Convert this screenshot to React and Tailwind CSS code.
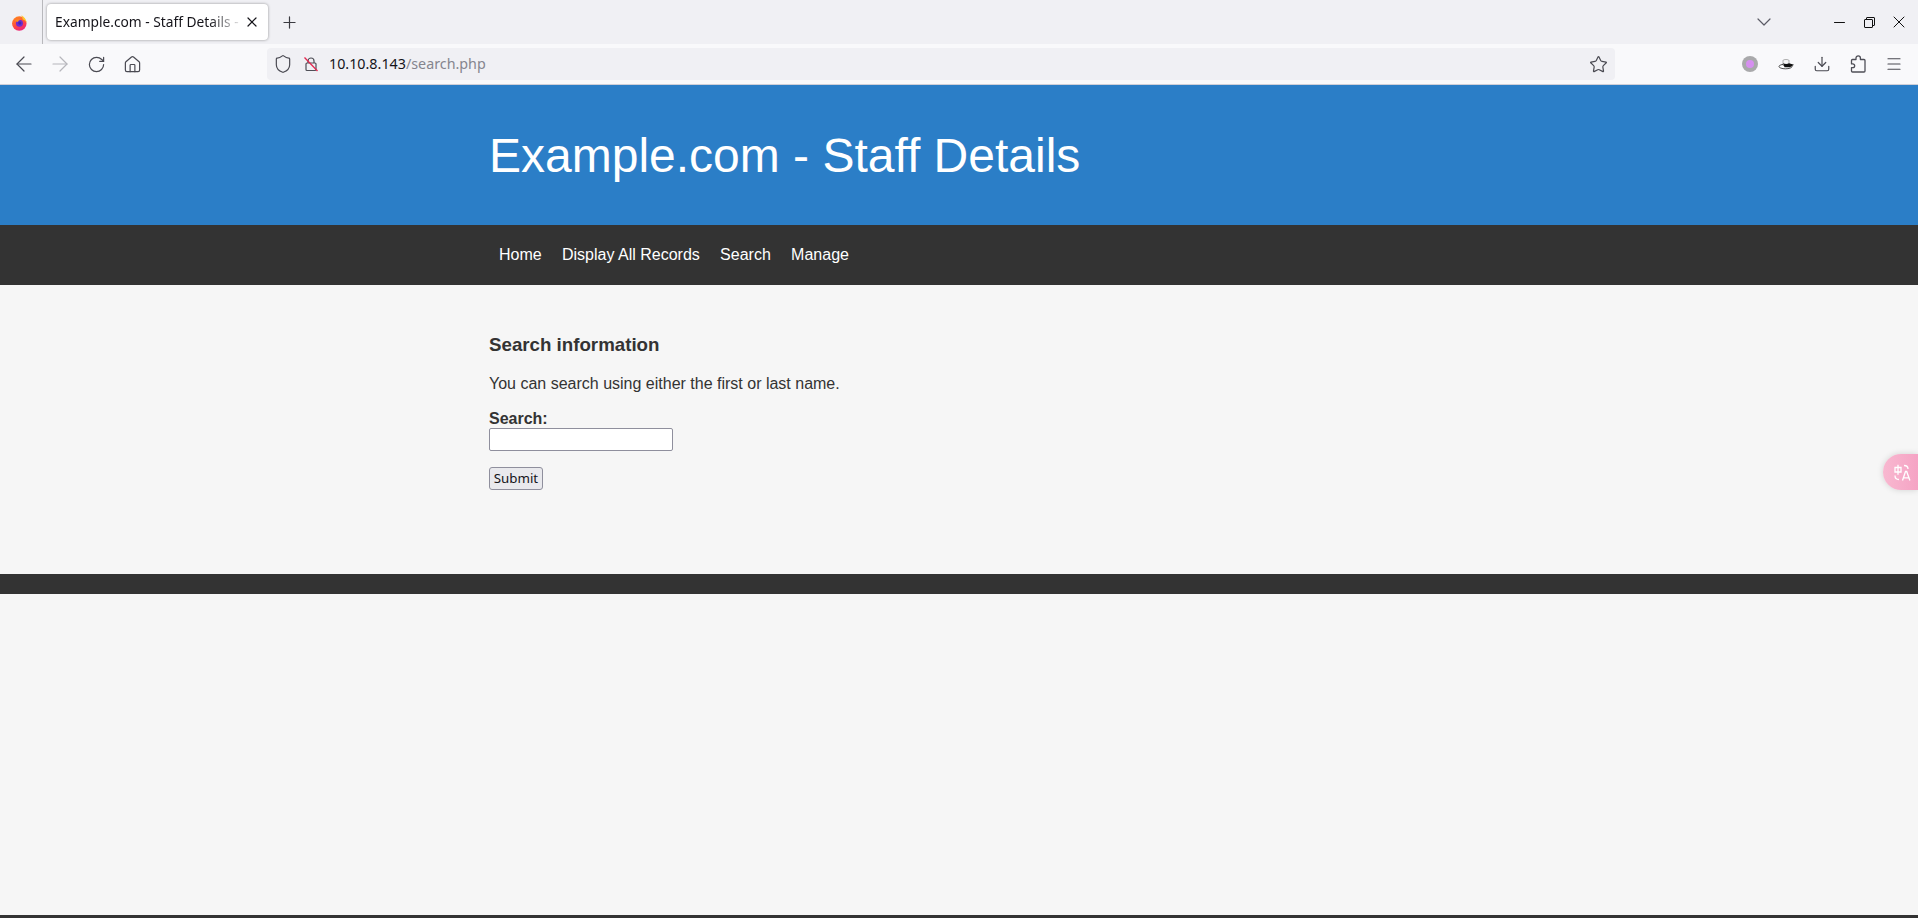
import React from "react";
import { ArrowLeft, ArrowRight, RotateCw, House, Shield, Star, Download, Menu, X, Plus, ChevronDown, Minus } from "lucide-react";

const navLinks = ["Home", "Display All Records", "Search", "Manage"];

// Firefox logo, drawn by hand
const FirefoxLogo = () => (
  <svg width="17" height="17" viewBox="0 0 16 16">
    <defs>
      <linearGradient id="ffBody" x1="0.2" y1="0" x2="0.7" y2="1">
        <stop offset="0" stopColor="#ff8a1f" />
        <stop offset="0.55" stopColor="#ff4a3e" />
        <stop offset="1" stopColor="#ea1f84" />
      </linearGradient>
    </defs>
    <circle cx="7.800" cy="9" r="6.800" fill="url(#ffBody)" />
    <path d="M9.500 1c2.800 1.600 5 4 5.300 7.500-1-1.800-2.300-3-4-3.500.3-1.500-.3-2.800-1.300-4z" fill="#ffc928" />
    <circle cx="8" cy="8.600" r="3.300" fill="#6f2bd0" />
    <path d="M3.500 6.500c1.500-1.800 4.500-2 6.500-.8-1.800-.2-3 .4-3.500 1.800z" fill="#ff8a1f" />
    <circle cx="8.300" cy="8.500" r="1.500" fill="#3f2cb5" />
  </svg>
);

const InsecureLock = () => (
  <svg width="16" height="16" viewBox="0 0 16 16" fill="none">
    <path d="M5 7V5a3 3 0 0 1 6 0v2" stroke="#4f4f57" strokeWidth="1.200" />
    <rect x="3" y="7" width="10" height="7.500" rx="1" stroke="#4f4f57" strokeWidth="1.200" />
    <path d="M1.500 1.500 14.500 15" stroke="#e22850" strokeWidth="1.300" />
  </svg>
);

const HatIcon = () => (
  <svg width="17" height="12" viewBox="0 0 16 12">
    <ellipse cx="7" cy="8.500" rx="6.500" ry="2.300" fill="#fff" stroke="#222" strokeWidth="0.800" />
    <path d="M4.500 7.500V2.500C4.500 1.200 10.500 1.200 10.500 2.500V7.500z" fill="#f6f6f6" stroke="#444" strokeWidth="0.400" />
    <path d="M4.500 5.300c2 1 4.500 1 6 0l5 1.500-4 2.400H6z" fill="#111" />
  </svg>
);

const PuzzleIcon = () => (
  <svg width="16" height="18" viewBox="0 0 16 18" fill="none" stroke="#4f4f57" strokeWidth="1.300" strokeLinejoin="round">
    <path d="M6 3.500V3a2.200 2.200 0 0 1 4.400 0v1.500H14c.5 0 1 .5 1 1V16c0 .5-.5 1-1 1H2.500c-.5 0-1-.5-1-1v-3.300h1.300a1.900 1.900 0 0 0 0-3.800H1.500V5.500c0-.5.5-1 1-1H6z" />
  </svg>
);

const TranslateGlyph = () => (
  <svg width="17" height="17" viewBox="0 0 17 17" fill="none" stroke="#fff" strokeWidth="1.300">
    <path d="M1 3.500h6v4.500H1zM4 .8v10" />
    <path d="M1 11.500c0 2.500 1 4 4 4" />
    <path d="M10 1.500c2.500 0 4 1 4 3.500" />
    <path d="M8.500 16.500 11.500 7.500h1.200l3.200 9M9.700 13.800h5" />
  </svg>
);

export default function App() {
  return (
    <div className="relative h-[918px] overflow-hidden bg-[#f6f6f6] font-['Liberation_Sans',Arial,sans-serif] flex flex-col">
      {/* Tab strip */}
      <div className="h-[44px] bg-[#f0f0f4] flex items-center font-['Noto_Sans',sans-serif] shrink-0">
        <div className="w-[43px] h-full flex items-center justify-center border-r border-[#b8b8bc]">
          <div className="mr-[4px] flex"><FirefoxLogo /></div>
        </div>
        <div className="ml-[4px] w-[221px] h-[36px] bg-white rounded-[4px] shadow-[0_0_3px_rgba(0,0,0,0.4)] flex items-center pl-[8px]">
          <span className="w-[188px] overflow-hidden whitespace-nowrap text-[13.750px] text-[#15141a] [mask-image:linear-gradient(to_right,black_82%,transparent)]">Example.com - Staff Details -</span>
          <X size={16} absoluteStrokeWidth strokeWidth={1.2} className="text-[#15141a] ml-[1px]" />
        </div>
        <div className="ml-[12px]">
          <Plus size={19} absoluteStrokeWidth strokeWidth={1.2} className="text-[#3a3a40]" />
        </div>
        <div className="flex-1" />
        <ChevronDown size={24} absoluteStrokeWidth strokeWidth={1.2} className="text-[#5b5b66] mr-[48px]" />
        <div className="flex items-center pr-[4px]">
          <div className="w-[30px] flex justify-center">
            <Minus size={17} absoluteStrokeWidth strokeWidth={1.2} className="text-[#111]" />
          </div>
          <div className="w-[30px] flex justify-center">
            <div className="w-[11px] h-[11px] relative">
              <div className="absolute left-[2px] top-0 w-[9px] h-[9px] border border-[#111] rounded-[1px]" />
              <div className="absolute left-0 top-[2px] w-[9px] h-[9px] border border-[#111] rounded-[1px] bg-[#f0f0f4]" />
            </div>
          </div>
          <div className="w-[30px] flex justify-center">
            <X size={20} absoluteStrokeWidth strokeWidth={1} className="text-[#111]" />
          </div>
        </div>
      </div>

      {/* Toolbar */}
      <div className="h-[41px] bg-[#f9f9fb] border-b border-[#cfcfd8] flex items-center shrink-0">
        <div className="w-[267px] flex items-center pl-[6px]">
          <div className="w-[36px] flex justify-center"><ArrowLeft size={24} absoluteStrokeWidth strokeWidth={1.2} className="text-[#4a4a52]" /></div>
          <div className="w-[36px] flex justify-center"><ArrowRight size={24} absoluteStrokeWidth strokeWidth={1.2} className="text-[#b6b6bc]" /></div>
          <div className="w-[36px] flex justify-center"><RotateCw size={19} absoluteStrokeWidth strokeWidth={1.2} className="text-[#4a4a52]" /></div>
          <div className="w-[36px] flex justify-center"><House size={19} absoluteStrokeWidth strokeWidth={1.2} className="text-[#4a4a52]" /></div>
        </div>
        <div className="w-[1348px] h-[32px] bg-[#f0f0f4] rounded-[4px] flex items-center pl-[6px] pr-[7px] font-['Noto_Sans',sans-serif]">
          <Shield size={20} absoluteStrokeWidth strokeWidth={1.2} className="text-[#4a4a52]" />
          <div className="ml-[10px] flex"><InsecureLock /></div>
          <span className="ml-[10px] text-[14.300px] text-[#15141a]">10.10.8.143<span className="text-[#85858e]">/search.php</span></span>
          <div className="flex-1" />
          <Star size={19} absoluteStrokeWidth strokeWidth={1.2} className="text-[#4a4a52]" />
        </div>
        <div className="flex-1 flex items-center justify-end pr-[6px]">
          <div className="w-[36px] flex justify-center">
            <div className="w-[16px] h-[16px] rounded-full bg-[#a9a9ab] flex items-center justify-center">
              <div className="w-[8px] h-[8px] rounded-full bg-[#d68ff0]" />
            </div>
          </div>
          <div className="w-[36px] flex justify-center"><HatIcon /></div>
          <div className="w-[36px] flex justify-center"><Download size={18} absoluteStrokeWidth strokeWidth={1.2} className="text-[#4a4a52]" /></div>
          <div className="w-[36px] flex justify-center"><PuzzleIcon /></div>
          <div className="w-[36px] flex justify-center"><Menu size={18} absoluteStrokeWidth strokeWidth={1.2} className="text-[#4a4a52]" /></div>
        </div>
      </div>

      {/* Page header */}
      <div className="h-[140px] bg-[#2b7ec7] shrink-0">
        <div className="w-[940px] mx-auto">
          <h1 className="pt-[41px] text-[48px] leading-[60px] font-normal text-white">Example.com - Staff Details</h1>
        </div>
      </div>

      {/* Nav */}
      <div className="h-[60px] bg-[#333333] shrink-0">
        <div className="w-[940px] mx-auto flex gap-[0.3px]">
          {navLinks.map((link) => (
            <a key={link} className="px-[10px] py-[20px] text-[16px] leading-[20px] text-white">{link}</a>
          ))}
        </div>
      </div>

      {/* Main content */}
      <div className="h-[289px] shrink-0">
        <div className="w-[940px] mx-auto pt-[50px] text-[#333333]">
          <h3 className="text-[18.720px] leading-[20px] font-bold">Search information</h3>
          <p className="mt-[19px] text-[16px] leading-[20px]">You can search using either the first or last name.</p>
          <form className="mt-[16px]">
            <label className="block text-[16px] leading-[18px] font-bold">Search:</label>
            <input className="block w-[184px] h-[23px] bg-white border border-[#8f8f9d] rounded-[2px]" />
            <button type="button" className="mt-[16px] block w-[54px] h-[23px] bg-[#e9e9ed] border border-[#8f8f9d] rounded-[3px] text-[13.300px] leading-none text-[#15141a] font-['Noto_Sans',sans-serif]">Submit</button>
          </form>
        </div>
      </div>

      {/* Footer bar */}
      <div className="h-[20px] bg-[#333333] shrink-0" />
      <div className="flex-1" />
      <div className="h-[3px] bg-[#333333] shrink-0" />

      {/* Translate widget */}
      <div className="absolute right-0 top-[454px] w-[35px] h-[36px] rounded-l-[18px] bg-gradient-to-r from-[#f8b8d0] to-[#f5a3c4] shadow-[0_0_6px_rgba(0,0,0,0.15)] flex items-center pl-[11px]">
        <TranslateGlyph />
      </div>
    </div>
  );
}
